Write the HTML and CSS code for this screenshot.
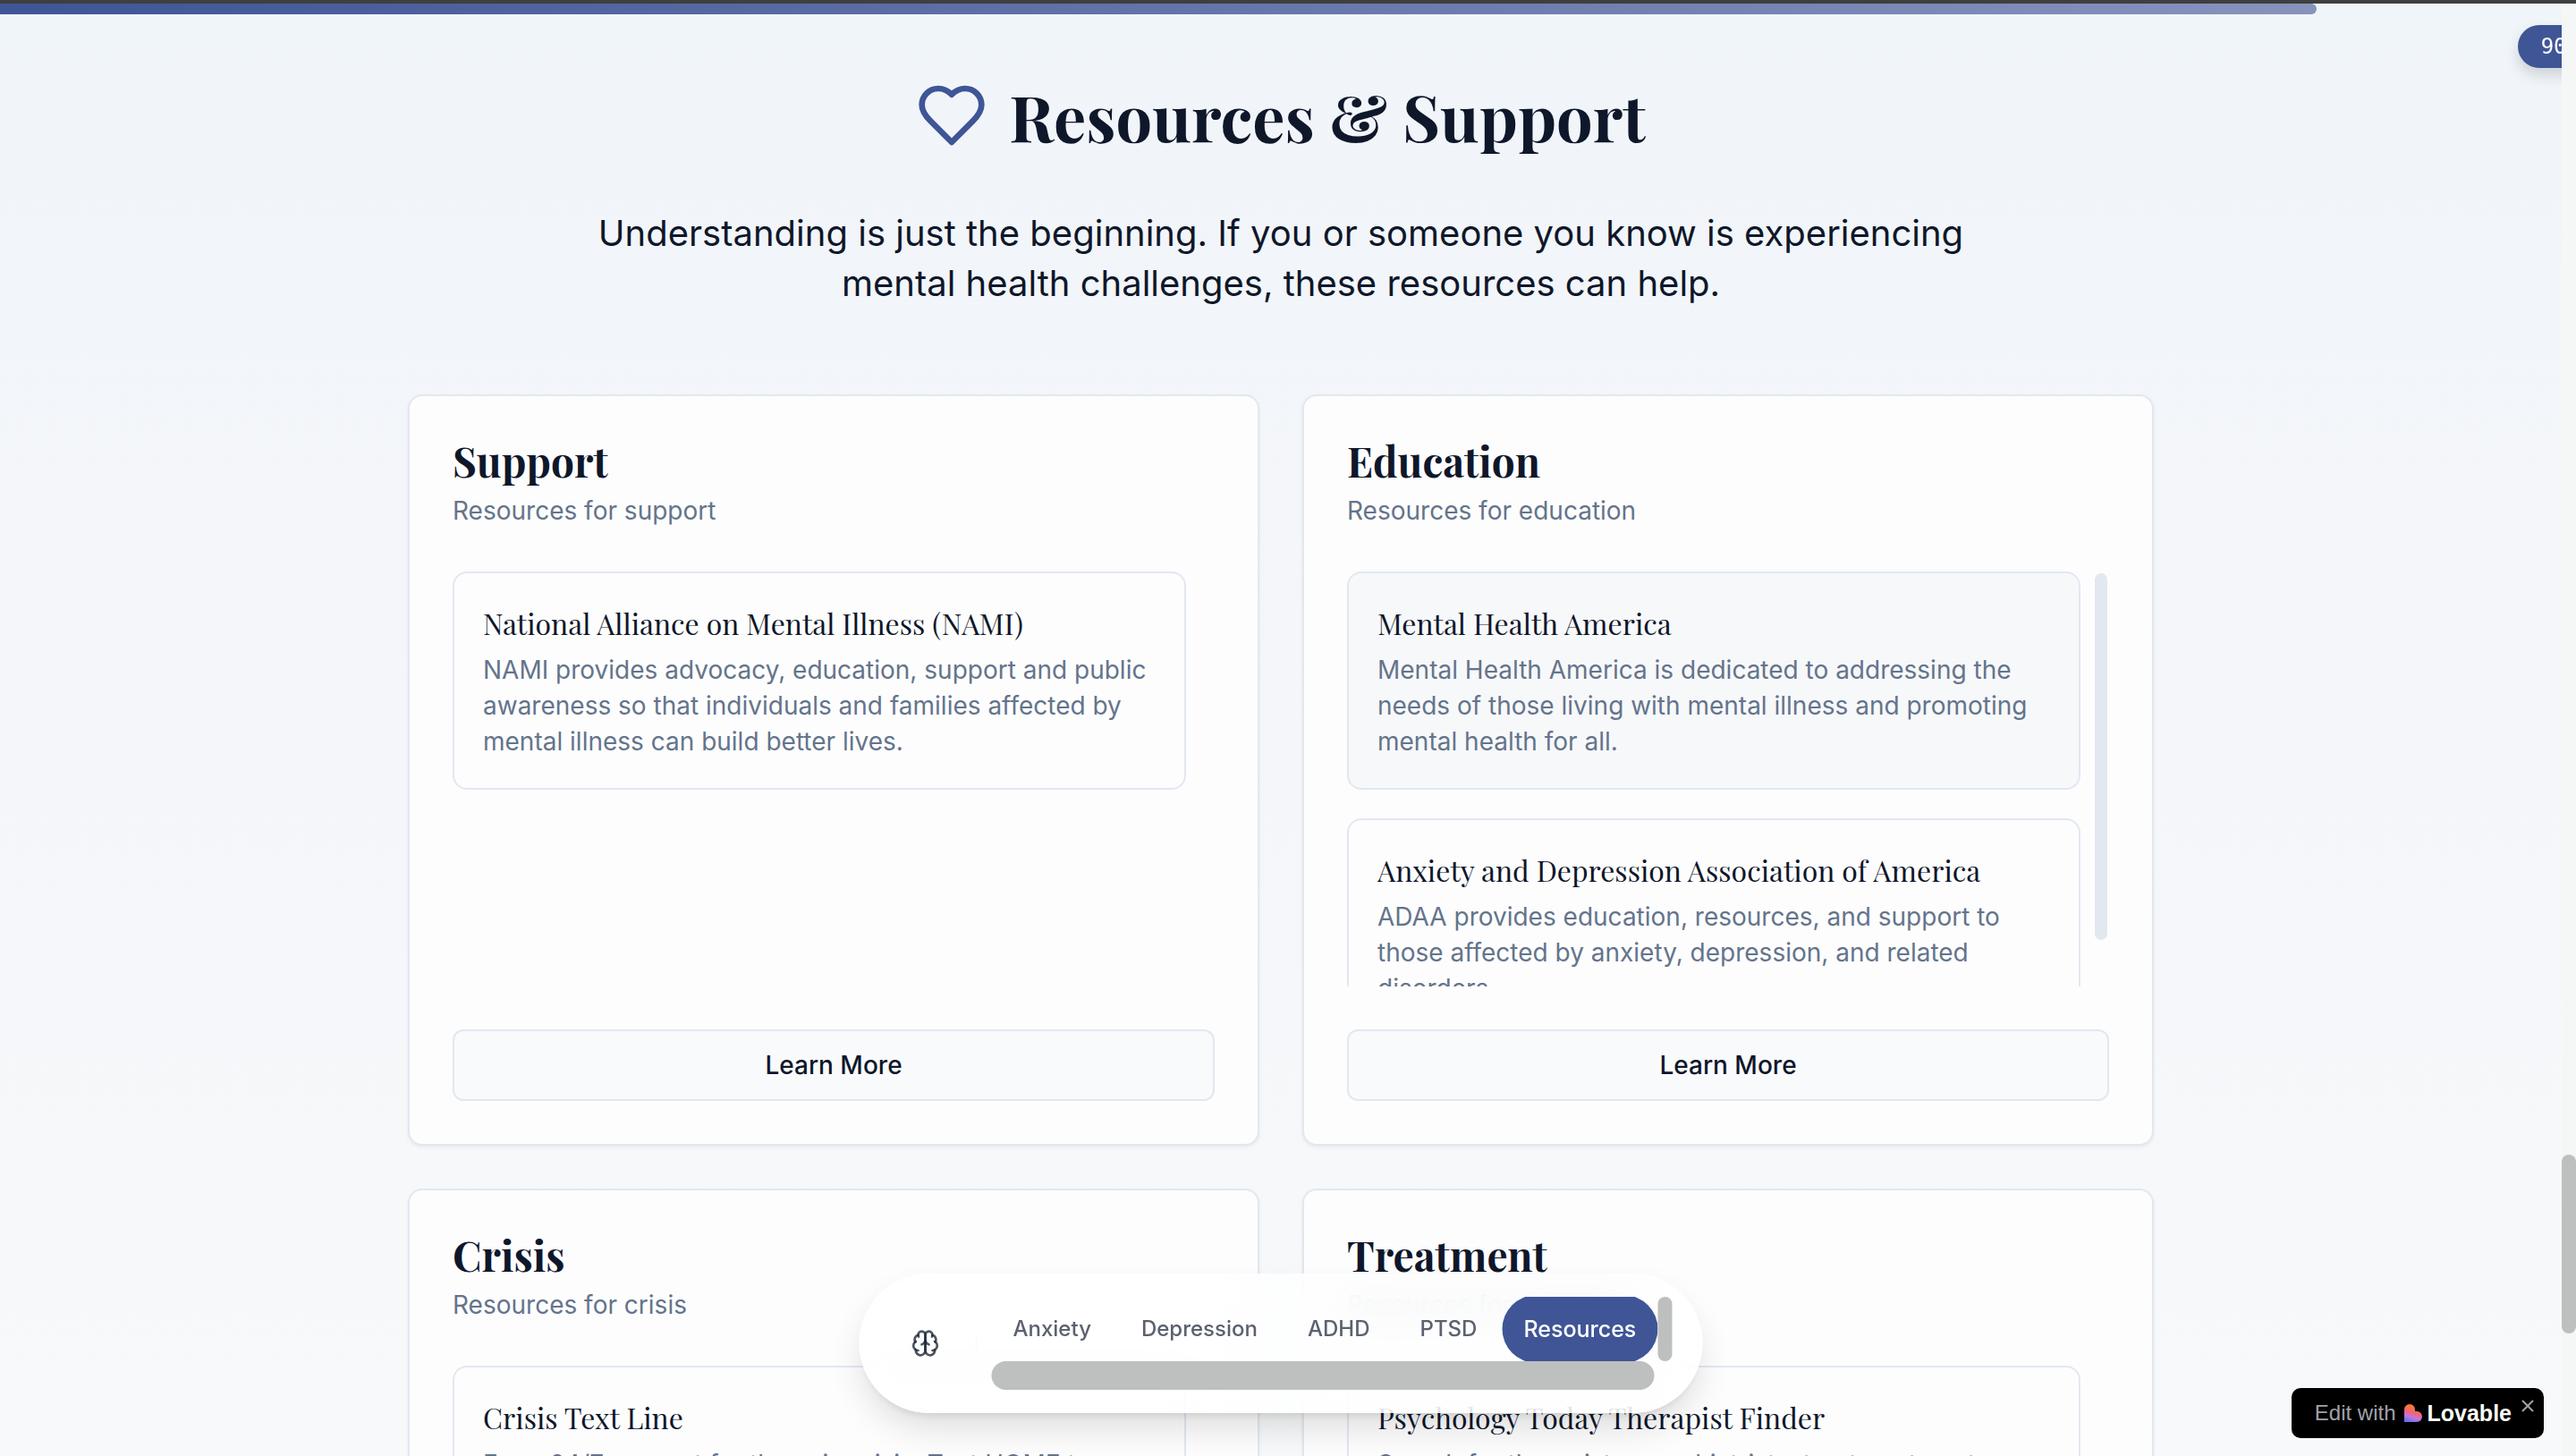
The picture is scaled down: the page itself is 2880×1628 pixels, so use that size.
FILE: index.html
```html
<!DOCTYPE html>
<html lang="en">
<head>
<meta charset="utf-8">
<meta name="viewport" content="width=device-width, initial-scale=1">
<title>Resources &amp; Support</title>
<link rel="stylesheet" href="styles.css">
</head>
<body>
<!-- Start progress -->
<div class="topline"></div>
<div class="progress"><div class="progress-bar" style="width:90.44%"></div></div>
<div class="percent">90%</div>
<!-- End progress -->

<main class="resources">
  <header class="intro">
    <h1>
      <svg class="heart" viewBox="0 0 24 24" aria-hidden="true"><path d="M19 14c1.49-1.46 3-3.21 3-5.5A5.5 5.5 0 0 0 16.5 3c-1.76 0-3 .5-4.5 2-1.5-1.5-2.74-2-4.5-2A5.5 5.5 0 0 0 2 8.5c0 2.3 1.5 4.05 3 5.5l7 7Z"/></svg>
      Resources &amp; Support
    </h1>
    <p>Understanding is just the beginning. If you or someone you know is experiencing mental health challenges, these resources can help.</p>
  </header>

  <div class="cards">
    <section class="card">
      <h2>Support</h2>
      <p class="sub">Resources for support</p>
      <div class="list">
        <div class="items">
          <article class="item">
            <h3>National Alliance on Mental Illness (NAMI)</h3>
            <p>NAMI provides advocacy, education, support and public awareness so that individuals and families affected by mental illness can build better lives.</p>
          </article>
        </div>
      </div>
      <button class="more" type="button">Learn More</button>
    </section>

    <section class="card">
      <h2>Education</h2>
      <p class="sub">Resources for education</p>
      <div class="list">
        <div class="items">
          <article class="item active">
            <h3>Mental Health America</h3>
            <p>Mental Health America is dedicated to addressing the needs of those living with mental illness and promoting mental health for all.</p>
          </article>
          <article class="item">
            <h3>Anxiety and Depression Association of America</h3>
            <p>ADAA provides education, resources, and support to those affected by anxiety, depression, and related disorders.</p>
          </article>
        </div>
        <div class="thumb"></div>
      </div>
      <button class="more" type="button">Learn More</button>
    </section>

    <section class="card">
      <h2>Crisis</h2>
      <p class="sub">Resources for crisis</p>
      <div class="list">
        <div class="items">
          <article class="item">
            <h3>Crisis Text Line</h3>
            <p>Free, 24/7 support for those in crisis. Text HOME to 741741 from anywhere in the US.</p>
          </article>
        </div>
      </div>
      <button class="more" type="button">Learn More</button>
    </section>

    <section class="card">
      <h2>Treatment</h2>
      <p class="sub">Resources for treatment</p>
      <div class="list">
        <div class="items">
          <article class="item">
            <h3>Psychology Today Therapist Finder</h3>
            <p>Search for therapists, psychiatrists, treatment centers and support groups near you.</p>
          </article>
        </div>
      </div>
      <button class="more" type="button">Learn More</button>
    </section>
  </div>
</main>

<!-- Start Nav -->
<nav class="dock">
  <button class="dock-home" type="button" aria-label="Top">
    <svg viewBox="0 0 24 24" aria-hidden="true">
      <path d="M12 5a3 3 0 1 0-5.997.125 4 4 0 0 0-2.526 5.77 4 4 0 0 0 .556 6.588A4 4 0 1 0 12 18Z"/>
      <path d="M12 5a3 3 0 1 1 5.997.125 4 4 0 0 1 2.526 5.77 4 4 0 0 1-.556 6.588A4 4 0 1 1 12 18Z"/>
      <path d="M15 13a4.5 4.5 0 0 1-3-4 4.5 4.5 0 0 1-3 4"/>
      <path d="M17.599 6.5a3 3 0 0 0 .399-1.375M6.003 5.125A3 3 0 0 0 6.401 6.5M3.477 10.896a4 4 0 0 1 .585-.396M19.938 10.5a4 4 0 0 1 .585.396M6 18a4 4 0 0 1-1.967-.516M19.967 17.484A4 4 0 0 1 18 18"/>
    </svg>
  </button>
  <span class="dock-line"></span>
  <div class="dock-scroll">
    <div class="dock-links">
      <a href="#anxiety">Anxiety</a>
      <a href="#depression">Depression</a>
      <a href="#adhd">ADHD</a>
      <a href="#ptsd">PTSD</a>
      <a href="#resources" class="current">Resources</a>
    </div>
    <div class="dock-v"></div>
    <div class="dock-h"></div>
  </div>
</nav>
<!-- End Nav -->

<div class="page-scroll"><div class="page-thumb"></div></div>

<div class="lovable">
  <a href="#edit">
    <span>Edit with</span>
    <svg viewBox="0 0 20 20" aria-hidden="true">
      <defs><linearGradient id="lv" x1="0.6" y1="0" x2="0.3" y2="1">
        <stop offset="0.2" stop-color="#f5793a"/><stop offset="0.5" stop-color="#f0647c"/><stop offset="0.72" stop-color="#c077dc"/><stop offset="1" stop-color="#5a73f5"/>
      </linearGradient></defs>
      <path fill="url(#lv)" d="M0 6a6 6 0 0 1 12 0v2h2a6 6 0 0 1 0 12H0Z"/>
    </svg>
    <strong>Lovable</strong>
  </a>
  <button type="button" aria-label="Close"><svg viewBox="0 0 14 14" aria-hidden="true"><path d="M1 1l12 12M13 1L1 13"/></svg></button>
</div>
</body>
</html>
```
FILE: styles.css
```css
* {
  box-sizing: border-box;
}
body {
  margin: 0;
  height: 100vh;
  overflow: hidden;
  padding-right: 16px;
  font-family: Inter, "Liberation Sans", sans-serif;
  color: #0f172a;
  background: linear-gradient(#f0f5f9, #f5f6fa 50%, #f8f9fa);
}
h1, h2, h3, p {
  margin: 0;
}
h1, h2, h3 {
  font-family: "Playfair Display", "Liberation Serif", serif;
}
button {
  font-family: inherit;
  cursor: pointer;
}
a {
  text-decoration: none;
}

/* progress */
.topline {
  height: 4px;
  margin-right: -16px;
  background: #3f3f3f;
}
.progress {
  height: 12px;
}
.progress-bar {
  height: 12px;
  border-radius: 0 6px 6px 0;
  background: linear-gradient(90deg, #3f5596, #8793bd);
}
.percent {
  position: fixed;
  top: 28px;
  right: -24px;
  height: 48px;
  padding: 0 20px 0 26px;
  border-radius: 24px;
  background: #3f5596;
  color: #fff;
  font: 24px/48px "DejaVu Sans Mono", monospace;
  box-shadow: 0 8px 16px rgba(0,0,0,.15);
}

/* heading */
.resources {
  max-width: 2048px;
  margin: 0 auto;
  padding: 73px 48px 0;
}
.intro {
  text-align: center;
  margin-bottom: 96px;
}
.intro h1 {
  display: flex;
  justify-content: center;
  align-items: center;
  gap: 24px;
  margin-bottom: 64px;
  font-size: 72px;
  line-height: 80px;
}
.heart {
  width: 80px;
  height: 80px;
  fill: none;
  stroke: #3f5596;
  stroke-width: 2;
  stroke-linejoin: round;
}
.intro p {
  max-width: 1536px;
  margin: 0 auto;
  font-size: 40px;
  line-height: 56px;
}

/* cards */
.cards {
  display: grid;
  grid-template-columns: 1fr 1fr;
  gap: 48px;
}
.card {
  padding: 48px;
  border: 2px solid #e2e8f0;
  border-radius: 16px;
  background: #fdfdfe;
  box-shadow: 0 2px 4px rgba(0,0,0,.06);
}
.card h2 {
  margin-bottom: 12px;
  font-size: 46px;
  line-height: 48px;
}
.sub, .item p {
  font-size: 28px;
  line-height: 40px;
  color: #64748b;
}
.list {
  display: flex;
  height: 464px;
  margin: 48px 0;
  overflow: hidden;
}
.items {
  flex: 1;
  margin-right: 32px;
}
.item {
  padding: 32px;
  border: 2px solid #e2e8f0;
  border-radius: 16px;
  margin-bottom: 32px;
}
.item.active {
  background: #f7f8fa;
}
.item h3 {
  margin-bottom: 8px;
  font-size: 32px;
  font-weight: normal;
  line-height: 48px;
}
.thumb {
  width: 14px;
  height: 410px;
  margin: 2px 2px 0 -16px;
  border-radius: 7px;
  background: #e2e8f0;
}
.more {
  display: block;
  width: 100%;
  height: 80px;
  border: 2px solid #e2e8f0;
  border-radius: 12px;
  background: #f9fafc;
  color: #0f172a;
  font-size: 28px;
  font-weight: 500;
}

/* floating nav */
.dock {
  position: fixed;
  bottom: 48px;
  left: calc(50% - 8px);
  transform: translateX(-50%);
  display: flex;
  align-items: center;
  padding: 26px 34px;
  border-radius: 78px;
  background: rgba(255,255,255,.75);
  backdrop-filter: blur(24px);
  box-shadow: 0 20px 40px -6px rgba(0,0,0,.14), 0 8px 12px -8px rgba(0,0,0,.14);
}
.dock-home {
  width: 80px;
  height: 80px;
  padding: 24px;
  border: 0;
  background: none;
}
.dock-home svg {
  display: block;
  width: 32px;
  height: 32px;
  fill: none;
  stroke: #1f2937;
  stroke-opacity: .8;
  stroke-width: 2;
  stroke-linecap: round;
}
.dock-line {
  width: 2px;
  height: 16px;
  margin: 0 16px;
  background: #fafbfc;
}
.dock-scroll {
  display: grid;
  grid-template-columns: 745px 16px;
  grid-template-rows: 72px 32px;
}
.dock-links {
  display: flex;
  align-items: center;
  gap: 8px;
  overflow: hidden;
}
.dock-links a {
  flex: none;
  padding: 0 24px;
  border-radius: 38px;
  color: #5b616f;
  font-size: 24px;
  font-weight: 500;
  line-height: 76px;
}
.dock-links .current {
  margin: 0 -4px;
  background: #3f5596;
  color: #fff;
  font-size: 25px;
}
.dock-v, .dock-h {
  border-radius: 16px;
  background: #bebfbf;
}
.dock-h {
  margin-right: 4px;
}

/* page scrollbar */
.page-scroll {
  position: fixed;
  top: 4px;
  right: 0;
  bottom: 0;
  width: 16px;
  background: #f5f7f6;
}
.page-thumb {
  height: 200px;
  margin-top: 1287px;
  border-radius: 8px;
  background: #bebfbf;
}

/* badge */
.lovable {
  position: fixed;
  right: 36px;
  bottom: 20px;
  display: flex;
  height: 56px;
  padding: 0 11px 0 26px;
  border-radius: 10px;
  background: #000;
  font-family: "Liberation Sans", Arial, sans-serif;
}
.lovable a {
  display: flex;
  align-items: center;
  color: #a1a1aa;
  font-size: 24px;
}
.lovable a svg {
  width: 20px;
  height: 20px;
  margin: 0 6px 0 9px;
}
.lovable strong {
  color: #fcfbf8;
  font-size: 25px;
}
.lovable button {
  width: 14px;
  height: 14px;
  margin: 13px 0 0 11px;
  padding: 0;
  border: 0;
  background: none;
}
.lovable button svg {
  display: block;
  stroke: #a1a1aa;
  stroke-width: 2;
}
```
